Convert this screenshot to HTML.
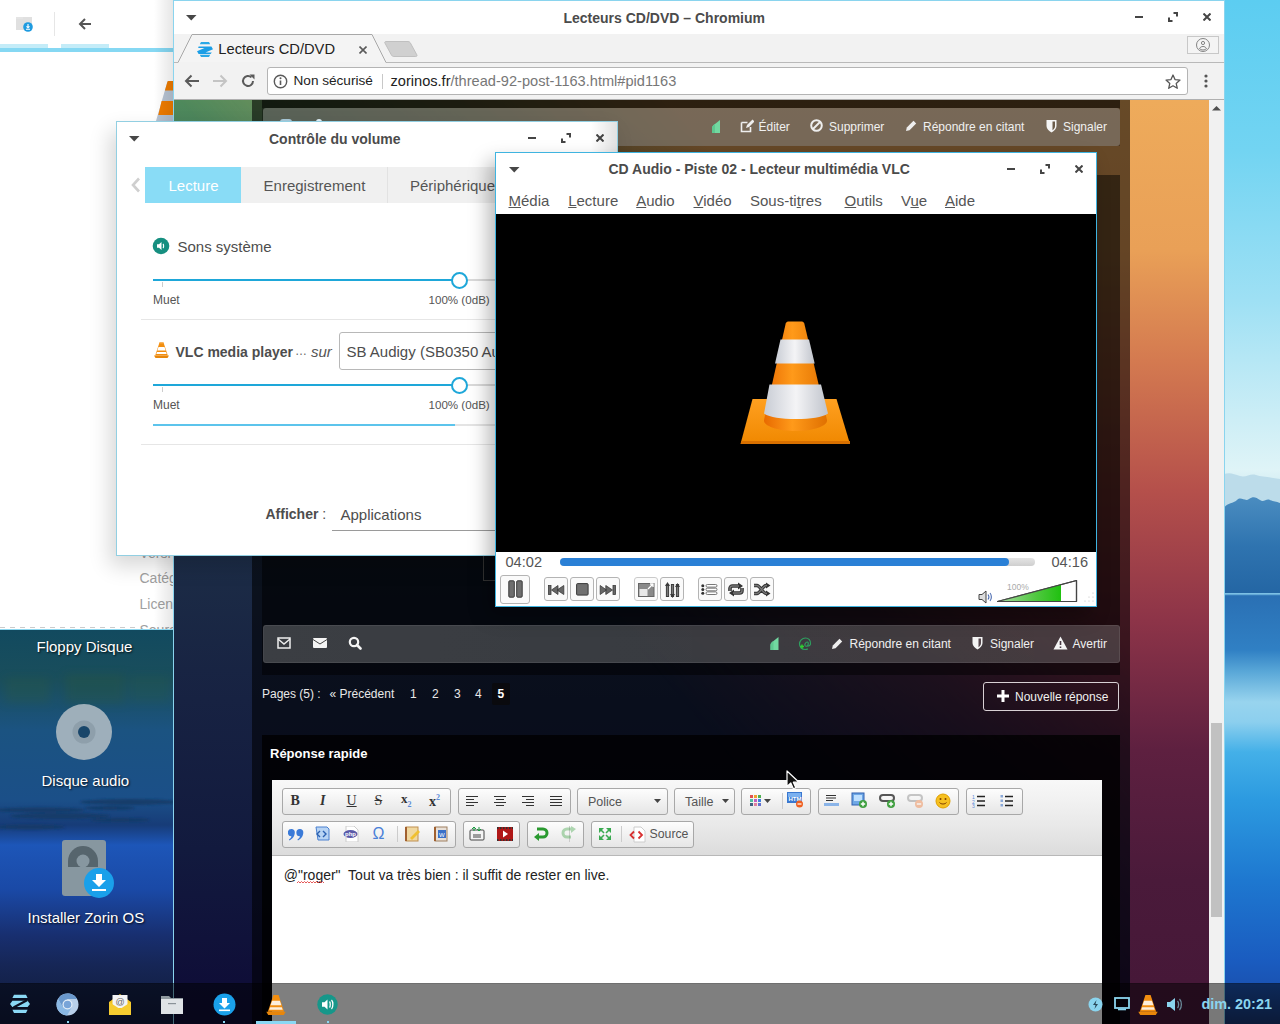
<!DOCTYPE html>
<html><head><meta charset="utf-8">
<style>
*{margin:0;padding:0;box-sizing:border-box}
html,body{width:1280px;height:1024px;overflow:hidden;background:#3a9ad8;font-family:"Liberation Sans",sans-serif}
.a{position:absolute}
.t{position:absolute;white-space:pre;line-height:1}
.vb{border:1px solid #b4b4b4;border-radius:3px;background:#fafafa}
.eg{border:1px solid #a8a8a8;border-radius:3px;background:linear-gradient(to bottom,#fdfdfd,#e6e6e6)}
</style></head><body>
<!-- WALLPAPER -->
<div class="a" id="wall" style="left:0;top:0;width:1280px;height:1024px;background:linear-gradient(to bottom,#5ccdf1 0px,#72d4f2 150px,#9ee0f4 300px,#cdeef6 420px,#dff4f7 470px,#c8e6f0 500px,#3a7ab0 560px,#2a6aa6 592px,#70b8e0 593px,#2a70b4 596px,#3080c4 650px,#5aa8d8 672px,#98d4ee 702px,#8ccfee 722px,#44b0e8 752px,#2c9ae0 800px,#1e78d0 880px,#1a5cc0 960px,#1a54b4 983px,#183470 1024px)"></div>
<div class="a" style="left:0;top:630px;width:174px;height:394px;background:linear-gradient(to bottom,#124a5f 0px,#1a4e5c 50px,#1b5381 100px,#1b4f88 170px,#173c78 195px,#1d56b8 215px,#1a49a6 260px,#182f70 305px,#162656 335px,#14224c 353px,#101a3c 394px)"></div>

<svg class="a" style="left:1224px;top:460px" width="56" height="250" viewBox="0 0 56 250"><defs><linearGradient id="tr" x1="0" y1="0" x2="0" y2="1"><stop offset="0" stop-color="#4a8cc0"/><stop offset=".5" stop-color="#2f74b0"/><stop offset="1" stop-color="#2466a4"/></linearGradient></defs><path d="M0 14c6-2 10 0 16 2s10-3 16-1 14 2 24 4V133H0z" fill="#bcdcea"/><path d="M0 48c4-6 9-4 13-8s8 2 12-1 7-2 11 1 6-2 10 0 6 1 10 3V133H0z" fill="url(#tr)"/><rect x="0" y="133" width="56" height="1.5" fill="#7cc0e4"/></svg>
<svg class="a" style="left:0;top:630px" width="174" height="360" viewBox="0 0 174 360"><defs><filter id="bl" x="-20%" y="-50%" width="140%" height="200%"><feGaussianBlur stdDeviation="1.2"/></filter><filter id="bl2" x="-20%" y="-50%" width="140%" height="200%"><feGaussianBlur stdDeviation="5"/></filter></defs>
<g filter="url(#bl2)" opacity=".3"><rect x="5" y="48" width="45" height="25" fill="#2a5a40"/><rect x="65" y="44" width="60" height="30" fill="#2a5838"/><rect x="130" y="46" width="40" height="26" fill="#285a48"/></g>
<g filter="url(#bl)" fill="#153a66" opacity=".85"><ellipse cx="130" cy="172" rx="50" ry="3"/><ellipse cx="40" cy="180" rx="45" ry="2.5"/><ellipse cx="60" cy="186" rx="50" ry="3"/><ellipse cx="120" cy="190" rx="30" ry="2"/><ellipse cx="30" cy="197" rx="35" ry="2.5"/><ellipse cx="110" cy="178" rx="25" ry="2"/></g></svg>
<!-- LEFT APP WINDOW -->
<div class="a" id="leftwin" style="left:0;top:0;width:174px;height:630px;background:#fff;overflow:hidden">
  <div class="a" style="left:0;top:44px;width:48px;height:4px;background:#c4ecf8"></div>
  <div class="a" style="left:61px;top:44px;width:48px;height:4px;background:#c4ecf8"></div>
  <div class="a" style="left:0;top:48px;width:174px;height:4px;background:#86d8f3"></div>
  <div class="a" style="left:16px;top:17px;width:16px;height:13px;background:#e0e0e0"></div>
  <div class="a" style="left:16px;top:17px;width:7px;height:2px;background:#e4e4e4"></div>
  <svg class="a" style="left:23px;top:22px" width="10" height="10"><circle cx="5" cy="5" r="4.8" fill="#1e9be0"/><path d="M5 2v3.5M3.5 4.3L5 5.8 6.5 4.3M3 7.3h4" stroke="#fff" stroke-width="1.1" fill="none"/></svg>
  <div class="a" style="left:54px;top:12px;width:1px;height:24px;background:#e6e6e6"></div>
  <svg class="a" style="left:78px;top:17px" width="14" height="14" viewBox="0 0 14 14"><path d="M13 7H2M7 2L2 7l5 5" stroke="#555" stroke-width="2" fill="none"/></svg>
  <svg class="a" style="left:148px;top:80px" width="30" height="42" viewBox="0 0 30 42"><path d="M19.5 1.5c.5-.5 1-.6 2-.6H26V41H8z" fill="#b8c4d4"/><path d="M19.5 1.5c.5-.5 1-.6 2-.6H26v9.5H16.9z M13.6 21H26v14H10.3z" fill="#f07c00"/><path d="M2 41h7v1H2z" fill="#e08a20"/></svg>
  <div class="t" style="left:139.5px;top:546px;font-size:14px;color:#a0a0a0">Versi</div>
  <div class="t" style="left:139.5px;top:571.3px;font-size:14px;color:#a0a0a0">Catég</div>
  <div class="t" style="left:139.5px;top:597px;font-size:14px;color:#a0a0a0">Licen</div>
  <div class="t" style="left:139.5px;top:622.8px;font-size:14px;color:#a0a0a0">Sourc</div>
  <div class="a" style="left:0;top:627px;width:139px;height:1px;background:repeating-linear-gradient(to right,#ccc 0 5px,transparent 5px 10px)"></div>
  <div class="a" style="left:154px;top:0;width:20px;height:630px;background:linear-gradient(to right,rgba(0,0,0,0),rgba(0,0,0,0.1))"></div>
</div>
<div class="a" style="left:0;top:629px;width:174px;height:1px;background:#8dd6ee"></div>

<!-- DESKTOP ICONS -->
<div class="t" style="left:36.5px;top:638.5px;font-size:15px;color:#fff;text-shadow:1px 1px 2px rgba(0,0,0,.8)">Floppy Disque</div>
<svg class="a" style="left:55px;top:703px" width="58" height="58"><circle cx="29" cy="29" r="28" fill="#a9b7c0" fill-opacity=".92"/><circle cx="29" cy="29" r="11.5" fill="#8e9fab"/><circle cx="29" cy="29" r="6" fill="#19466a"/></svg>
<div class="t" style="left:41.5px;top:773.3px;font-size:15px;color:#fff;text-shadow:1px 1px 2px rgba(0,0,0,.8)">Disque audio</div>
<svg class="a" style="left:61px;top:839px" width="56" height="60"><rect x="1" y="1" width="44" height="56" rx="3" fill="#8797a0"/><path d="M7 28V22a15 15 0 0 1 30 0v6z" fill="#56656d"/><circle cx="22" cy="22" r="6.5" fill="#8797a0"/><circle cx="38" cy="44" r="15" fill="#1aa0ea"/><path d="M35 35h6v6h4l-7 7-7-7h4z" fill="#fff"/><rect x="31" y="50" width="14" height="2" fill="#fff"/></svg>
<div class="t" style="left:27.5px;top:909.8px;font-size:15px;color:#fff;text-shadow:1px 1px 2px rgba(0,0,0,.8)">Installer Zorin OS</div>

<!-- BROWSER -->
<div class="a" id="browser" style="left:173px;top:0;width:1052px;height:1024px;background:#fff;overflow:hidden">
  <!-- page bg -->
  <div class="a" style="left:1px;top:100px;width:1036px;height:924px;background:linear-gradient(to bottom,#4f8a5c 0px,#3a6a58 120px,#26445c 300px,#1c2c46 455px,#172242 600px,#121a3e 750px,#0f0e38 883px,#0e0c34 924px)"></div>
  <div class="a" style="left:1px;top:100px;width:1036px;height:924px;background:linear-gradient(to bottom,#eeab5b 0px,#e9a057 150px,#d47a50 260px,#b5504b 390px,#8d3448 520px,#5e2040 650px,#4a1a3a 780px,#461838 883px,#451838 924px);-webkit-mask-image:linear-gradient(50deg,rgba(0,0,0,0) 43%,rgba(0,0,0,.45) 58%,#000 70%)"></div>
  <div class="a" style="left:957px;top:100px;width:79px;height:924px;background:linear-gradient(to bottom,#eeab5b 0px,#e9a057 150px,#d47a50 260px,#b5504b 390px,#8d3448 520px,#5e2040 650px,#4a1a3a 780px,#461838 883px,#451838 924px)"></div>
  <!-- container -->
  <div class="a" style="left:79px;top:100px;width:878px;height:924px;background:rgba(0,0,0,.57)"></div>
  <!-- post 1 header -->
  <div class="a" style="left:89px;top:100px;width:858px;height:46px;background:rgba(0,0,0,.32)"></div>
  <div class="a" style="left:89px;top:100px;width:858px;height:8px;background:rgba(0,0,0,.35)"></div>
  <div class="a" style="left:90px;top:108px;width:857px;height:38px;background:rgba(255,255,255,.27);border-radius:3px"></div>
  <!-- post 1 body -->
  <div class="a" style="left:89px;top:175px;width:858px;height:500px;background:rgba(0,0,0,.48)"></div>
  <div class="a" style="left:310px;top:480px;width:40px;height:101px;border-left:1px solid #333;border-bottom:1px solid #333"></div>
  <div class="a" style="left:90px;top:625px;width:857px;height:38px;background:linear-gradient(to right,rgba(255,255,255,.22),rgba(255,255,255,.2));border-radius:3px;border:1px solid rgba(255,255,255,.07)"></div>
  <!-- reponse rapide box -->
  <div class="a" style="left:89px;top:735px;width:858px;height:289px;background:rgba(0,0,0,.78)"></div>
  <!-- scrollbar -->
  <div class="a" style="left:1036px;top:100px;width:15px;height:924px;background:#f1f1f1"></div>
  <div class="a" style="left:1038px;top:723px;width:11px;height:194px;background:#c1c1c1"></div>
  <svg class="a" style="left:1039px;top:105px" width="9" height="6"><path d="M0 5.5L4.5 1 9 5.5z" fill="#505050"/></svg>

  <!-- post1 bar items -->
  <div class="a" style="left:107px;top:119px;width:12px;height:3px;border-radius:6px 6px 0 0;background:#a8c8d8"></div>
  <div class="a" style="left:143px;top:119px;width:6px;height:3px;border-radius:3px 3px 0 0;background:#e0f0f8"></div>
  <svg class="a" style="left:538px;top:120px" width="10" height="13" viewBox="0 0 10 13"><path d="M1 13V8c0-2 1.5-3 3-4l5-4v13z" fill="#72d8a0"/><path d="M1 13V8c0-2 1.5-3 3-4v9z" fill="#5ec890"/></svg>
  <svg class="a" style="left:567px;top:119px" width="14" height="14" viewBox="0 0 14 14"><path d="M1.5 3.5h6M1.5 3.5v9h9V8" stroke="#eee" stroke-width="1.6" fill="none"/><path d="M6 9l1-3 5.5-5.5 2 2L9 8z" fill="#eee"/></svg>
  <div class="t" style="left:585.5px;top:121px;font-size:12px;color:#f0f0f0">Éditer</div>
  <svg class="a" style="left:637px;top:119px" width="13" height="13" viewBox="0 0 13 13"><circle cx="6.5" cy="6.5" r="5.3" stroke="#eee" stroke-width="2" fill="none"/><path d="M3 10L10 3" stroke="#eee" stroke-width="2"/></svg>
  <div class="t" style="left:656px;top:121px;font-size:12px;color:#f0f0f0">Supprimer</div>
  <svg class="a" style="left:732px;top:119px" width="12" height="13" viewBox="0 0 12 13"><path d="M1 12l.8-3.5L8.5 1.8l2.7 2.7-6.7 6.7z" fill="#eee"/></svg>
  <div class="t" style="left:750px;top:121px;font-size:12px;color:#f0f0f0">Répondre en citant</div>
  <svg class="a" style="left:873px;top:119px" width="11" height="14" viewBox="0 0 11 14"><path d="M.5 1h10v6c0 3-2.5 5-5 6.5C3 12 .5 10 .5 7z" fill="#f4f4f4"/><path d="M6.5 2.5h2.5v4.5c0 2-1.3 3.5-2.5 4.3z" fill="#6a5a48"/></svg>
  <div class="t" style="left:890px;top:121px;font-size:12px;color:#f0f0f0">Signaler</div>

  <!-- post2 bar items -->
  <svg class="a" style="left:104px;top:637px" width="14" height="12" viewBox="0 0 14 12"><rect x="1" y="1" width="12" height="10" stroke="#eee" stroke-width="1.5" fill="none"/><path d="M1 2l6 5 6-5" stroke="#eee" stroke-width="1.5" fill="none"/></svg>
  <svg class="a" style="left:140px;top:637px" width="14" height="12" viewBox="0 0 14 12"><rect x="0" y="1" width="14" height="10" rx="1" fill="#f4f4f4"/><path d="M0 2.5l7 4.5 7-4.5" stroke="#444" stroke-width="1" fill="none"/></svg>
  <svg class="a" style="left:175px;top:636px" width="14" height="14" viewBox="0 0 14 14"><circle cx="6" cy="6" r="4.2" stroke="#f4f4f4" stroke-width="2.2" fill="none"/><path d="M9 9l3.5 3.5" stroke="#f4f4f4" stroke-width="2.6" stroke-linecap="round"/></svg>
  <svg class="a" style="left:596px;top:637px" width="11" height="13" viewBox="0 0 10 13"><path d="M1 13V8c0-2 1.5-3 3-4l5-4v13z" fill="#72d8a0"/><path d="M1 13V8c0-2 1.5-3 3-4v9z" fill="#5ec890"/></svg>
  <svg class="a" style="left:624px;top:636px" width="16" height="15" viewBox="0 0 16 15"><path d="M11 9.5c-1 1-2.5 1-3 0-.6-1.4.8-3.5 2.2-3.5 1 0 1.2 1 1 2l-.3 1.5c.4 1 2 .4 2.6-1.5C14 4.5 11.5 2 8.5 2 5 2 2.5 4.8 2.5 8s2.5 5.5 5.5 5.5c1 0 2-.2 2.8-.6" stroke="#2ea060" stroke-width="1.2" fill="none"/><path d="M3 10.5h4M5 8.5v4" stroke="#2fd02f" stroke-width="1.5"/></svg>
  <svg class="a" style="left:658px;top:637px" width="12" height="13" viewBox="0 0 12 13"><path d="M1 12l.8-3.5L8.5 1.8l2.7 2.7-6.7 6.7z" fill="#eee"/></svg>
  <div class="t" style="left:676.5px;top:638px;font-size:12px;color:#f0f0f0">Répondre en citant</div>
  <svg class="a" style="left:799px;top:636px" width="11" height="14" viewBox="0 0 11 14"><path d="M.5 1h10v6c0 3-2.5 5-5 6.5C3 12 .5 10 .5 7z" fill="#f4f4f4"/><path d="M6.5 2.5h2.5v4.5c0 2-1.3 3.5-2.5 4.3z" fill="#54474c"/></svg>
  <div class="t" style="left:817px;top:638px;font-size:12px;color:#f0f0f0">Signaler</div>
  <svg class="a" style="left:880px;top:636px" width="15" height="14" viewBox="0 0 15 14"><path d="M7.5 .5L14.5 13.5H.5z" fill="#f4f4f4"/><path d="M7.5 5v4M7.5 10.5v1.5" stroke="#4a3a44" stroke-width="1.6"/></svg>
  <div class="t" style="left:899.5px;top:638px;font-size:12px;color:#f0f0f0">Avertir</div>

  <!-- pages row -->
  <div class="t" style="left:89px;top:688px;font-size:12px;color:#e8e8e8">Pages (5) :</div>
  <div class="t" style="left:156.5px;top:688px;font-size:12px;color:#e8e8e8">« Précédent</div>
  <div class="t" style="left:237px;top:688px;font-size:12px;color:#e8e8e8">1</div>
  <div class="t" style="left:259px;top:688px;font-size:12px;color:#e8e8e8">2</div>
  <div class="t" style="left:281px;top:688px;font-size:12px;color:#e8e8e8">3</div>
  <div class="t" style="left:302px;top:688px;font-size:12px;color:#e8e8e8">4</div>
  <div class="a" style="left:319px;top:683px;width:18px;height:22px;background:#0a0a0e;border-radius:2px"></div>
  <div class="t" style="left:324.5px;top:688px;font-size:12px;font-weight:bold;color:#fff">5</div>
  <div class="a" style="left:810px;top:682px;width:136px;height:29px;border:1px solid #d8d0d4;border-radius:3px"></div>
  <svg class="a" style="left:824px;top:690px" width="12" height="12"><path d="M6 0v12M0 6h12" stroke="#fff" stroke-width="3"/></svg>
  <div class="t" style="left:842px;top:691px;font-size:12px;color:#f0f0f0">Nouvelle réponse</div>
  <div class="t" style="left:97px;top:747px;font-size:13px;font-weight:bold;color:#fff">Réponse rapide</div>

  <!-- EDITOR -->
  <div class="a" style="left:99px;top:780px;width:830px;height:244px;background:#fff"></div>
  <div class="a" style="left:99px;top:780px;width:830px;height:76px;background:linear-gradient(to bottom,#f8f8f8,#e9e9e9 60%,#dcdcdc);border-bottom:1px solid #b8b8b8"></div>
  <!-- row1 groups -->
  <div class="a eg" style="left:108.5px;top:787.5px;width:169px;height:27px"></div>
  <div class="a eg" style="left:284.5px;top:787.5px;width:113px;height:27px"></div>
  <div class="a eg" style="left:404px;top:787.5px;width:91px;height:27px"></div>
  <div class="a eg" style="left:501px;top:787.5px;width:61px;height:27px"></div>
  <div class="a eg" style="left:568px;top:787.5px;width:70px;height:27px"></div>
  <div class="a eg" style="left:644.5px;top:787.5px;width:141px;height:27px"></div>
  <div class="a eg" style="left:792.5px;top:787.5px;width:57px;height:27px"></div>
  <!-- row2 groups -->
  <div class="a eg" style="left:108.5px;top:820.5px;width:174px;height:27px"></div>
  <div class="a eg" style="left:289.5px;top:820.5px;width:57px;height:27px"></div>
  <div class="a eg" style="left:353.5px;top:820.5px;width:57px;height:27px"></div>
  <div class="a eg" style="left:417.5px;top:820.5px;width:103px;height:27px"></div>
  <!-- row1 icons -->
  <div class="t" style="left:117.5px;top:794px;font-family:'Liberation Serif';font-size:14px;font-weight:bold;color:#333">B</div>
  <div class="t" style="left:147px;top:794px;font-family:'Liberation Serif';font-size:14px;font-style:italic;font-weight:bold;color:#333">I</div>
  <div class="t" style="left:173.5px;top:794px;font-family:'Liberation Serif';font-size:14px;color:#333;text-decoration:underline">U</div>
  <div class="t" style="left:201.5px;top:794px;font-family:'Liberation Serif';font-size:14px;color:#333;text-decoration:line-through">S</div>
  <div class="t" style="left:228px;top:792px;font-family:'Liberation Serif';font-size:13px;font-weight:bold;color:#333">x<sub style="font-size:8px;color:#5a8ad8">2</sub></div>
  <div class="t" style="left:256px;top:794px;font-family:'Liberation Serif';font-size:14px;font-weight:bold;color:#333">x<sup style="font-size:8px;color:#5a8ad8">2</sup></div>
  <svg class="a" style="left:292px;top:794px" width="14" height="14"><path d="M1 2.5h12M1 5.5h8M1 8.5h12M1 11.5h8" stroke="#333" stroke-width="1.2"/></svg>
  <svg class="a" style="left:320px;top:794px" width="14" height="14"><path d="M1 2.5h12M3 5.5h8M1 8.5h12M3 11.5h8" stroke="#333" stroke-width="1.2"/></svg>
  <svg class="a" style="left:348px;top:794px" width="14" height="14"><path d="M1 2.5h12M5 5.5h8M1 8.5h12M5 11.5h8" stroke="#333" stroke-width="1.2"/></svg>
  <svg class="a" style="left:376px;top:794px" width="14" height="14"><path d="M1 2.5h12M1 5.5h12M1 8.5h12M1 11.5h12" stroke="#333" stroke-width="1.2"/></svg>
  <div class="t" style="left:415px;top:795.5px;font-size:12.5px;color:#555">Police</div>
  <svg class="a" style="left:481px;top:799px" width="7" height="4"><path d="M0 0h7L3.5 4z" fill="#444"/></svg>
  <div class="t" style="left:512px;top:795.5px;font-size:12.5px;color:#555">Taille</div>
  <svg class="a" style="left:549px;top:799px" width="7" height="4"><path d="M0 0h7L3.5 4z" fill="#444"/></svg>
  <svg class="a" style="left:577px;top:795px" width="12" height="12"><rect x="0" y="0" width="3" height="3" fill="#e05050"/><rect x="4" y="0" width="3" height="3" fill="#f0a030"/><rect x="8" y="0" width="3" height="3" fill="#50b050"/><rect x="0" y="4" width="3" height="3" fill="#50c0a0"/><rect x="4" y="4" width="3" height="3" fill="#c060c0"/><rect x="8" y="4" width="3" height="3" fill="#4080e0"/><rect x="0" y="8" width="3" height="3" fill="#406080"/><rect x="4" y="8" width="3" height="3" fill="#e080a0"/><rect x="8" y="8" width="3" height="3" fill="#6070d0"/></svg>
  <svg class="a" style="left:591px;top:799px" width="7" height="4"><path d="M0 0h7L3.5 4z" fill="#444"/></svg>
  <div class="a" style="left:609px;top:793px;width:1px;height:16px;background:#ccc"></div>
  <svg class="a" style="left:614px;top:792px" width="17" height="16"><rect x="0" y="0" width="15" height="11" fill="#3a78d0"/><rect x="1" y="1" width="13" height="4" fill="#7ab0f0"/><text x="1.5" y="9" font-size="6" font-family="Liberation Sans" fill="#fff" font-weight="bold">HTM</text><circle cx="12.5" cy="12" r="3.5" fill="#f06020"/><path d="M10.5 12h4" stroke="#fff" stroke-width="1.2"/></svg>
  <svg class="a" style="left:651px;top:794px" width="15" height="12"><path d="M2 1.5h10M2 4h10M2 6.5h7" stroke="#333" stroke-width="1.2"/><rect x="0" y="9" width="15" height="3" fill="#8ab4e8"/></svg>
  <svg class="a" style="left:678px;top:792px" width="17" height="17"><rect x="1" y="1" width="12" height="12" fill="#6fa8e6" stroke="#3060b0"/><rect x="3" y="3" width="8" height="6" fill="#bfe0ff"/><circle cx="12" cy="12" r="4" fill="#40a040"/><path d="M12 9.8v4.4M9.8 12h4.4" stroke="#fff" stroke-width="1.4"/></svg>
  <svg class="a" style="left:706px;top:792px" width="17" height="17"><rect x="1" y="3" width="14" height="6" rx="3" fill="none" stroke="#555" stroke-width="2"/><circle cx="12" cy="12" r="4" fill="#40a040"/><path d="M12 9.8v4.4M9.8 12h4.4" stroke="#fff" stroke-width="1.4"/></svg>
  <svg class="a" style="left:734px;top:792px" width="17" height="17" opacity=".45"><rect x="1" y="3" width="14" height="6" rx="3" fill="none" stroke="#888" stroke-width="2"/><circle cx="12" cy="12" r="4" fill="#f08040"/><path d="M9.8 12h4.4" stroke="#fff" stroke-width="1.4"/></svg>
  <svg class="a" style="left:762px;top:793px" width="16" height="16"><circle cx="8" cy="8" r="7" fill="#f6c020" stroke="#e0a000"/><circle cx="5.5" cy="6" r="1" fill="#804000"/><circle cx="10.5" cy="6" r="1" fill="#804000"/><path d="M4.5 9.5c1.5 2 5.5 2 7 0" stroke="#804000" fill="none"/></svg>
  <svg class="a" style="left:799px;top:794px" width="14" height="14"><path d="M5 2.5h8M5 7h8M5 11.5h8" stroke="#222" stroke-width="1.3"/><text x="0" y="5" font-size="5" fill="#5a8ad8" font-family="Liberation Sans">1</text><text x="0" y="9.5" font-size="5" fill="#5a8ad8" font-family="Liberation Sans">2</text><text x="0" y="14" font-size="5" fill="#5a8ad8" font-family="Liberation Sans">3</text></svg>
  <svg class="a" style="left:827px;top:794px" width="14" height="14"><path d="M5 2.5h8M5 7h8M5 11.5h8" stroke="#222" stroke-width="1.3"/><rect x="0.5" y="1" width="2.5" height="2.5" fill="#8aa8d8"/><rect x="0.5" y="5.5" width="2.5" height="2.5" fill="#8aa8d8"/><rect x="0.5" y="10" width="2.5" height="2.5" fill="#8aa8d8"/></svg>
  <!-- row2 icons -->
  <svg class="a" style="left:115px;top:829px" width="16" height="12" viewBox="0 0 16 12"><path d="M3.5 0a3.3 3.3 0 0 1 3.3 3.6c0 3.5-2.3 6.5-5.3 8l-.6-1c1.5-1 2.4-2.2 2.5-3.4A3.2 3.2 0 0 1 3.5 0z M12 0a3.3 3.3 0 0 1 3.3 3.6c0 3.5-2.3 6.5-5.3 8l-.6-1c1.5-1 2.4-2.2 2.5-3.4A3.2 3.2 0 0 1 12 0z" fill="#3a7ad8"/></svg>
  <svg class="a" style="left:141px;top:826px" width="16" height="16"><path d="M2 1h11l2 2v11H4z" fill="#b8d4f4" stroke="#4a80d0"/><path d="M6 5l-3 3 3 3M9 5l3 3-3 3" stroke="#2a60b0" stroke-width="1.4" fill="none"/></svg>
  <svg class="a" style="left:341px;top:826px" width="16" height="16"></svg>
  <svg class="a" style="left:170px;top:826px" width="16" height="16"><path d="M3 0h8l4 4v12H3z" fill="#fff" stroke="#ccc"/><ellipse cx="7.5" cy="8" rx="7" ry="4" fill="#5a5aa8"/><text x="2" y="10" font-size="6" fill="#fff" font-family="Liberation Sans" font-weight="bold">php</text></svg>
  <div class="t" style="left:199.5px;top:826px;font-size:16px;color:#4a80d8">Ω</div>
  <div class="a" style="left:396px;top:826px;width:1px;height:16px;background:#ccc"></div>
  <div class="a" style="left:223.5px;top:826px;width:1px;height:16px;background:#ccc"></div>
  <svg class="a" style="left:232px;top:826px" width="15" height="16"><rect x="1" y="1" width="12" height="14" fill="#f0d8a0" stroke="#c09050"/><path d="M1 1v14" stroke="#a06030" stroke-width="2"/><path d="M5 12l8-8 2 2-8 8z" fill="#f0c030"/></svg>
  <svg class="a" style="left:261px;top:826px" width="15" height="16"><rect x="1" y="1" width="12" height="14" fill="#e8e0d8" stroke="#a08060"/><path d="M1 1v14" stroke="#a06030" stroke-width="2"/><rect x="4" y="4" width="8" height="8" fill="#3a70c8"/><text x="5" y="11" font-size="6" fill="#fff" font-family="Liberation Sans">W</text></svg>
  <svg class="a" style="left:296px;top:826px" width="16" height="15"><rect x="1" y="4" width="14" height="10" rx="1" fill="#f4f4f4" stroke="#444"/><path d="M4 9h8M4 11h8" stroke="#444"/><path d="M5 1v4M3 3l2-2 2 2M10 1v4M8 3l2 2 2-2" stroke="#1a9a40" stroke-width="1" fill="none"/></svg>
  <svg class="a" style="left:324px;top:826px" width="16" height="16"><rect x="0" y="1" width="16" height="14" fill="#b01818"/><path d="M0 2h16M0 14h16" stroke="#333" stroke-width="2" stroke-dasharray="1.5 1.5"/><path d="M6 4.5v7l5-3.5z" fill="#fff"/></svg>
  <svg class="a" style="left:360px;top:826px" width="16" height="15"><path d="M4 3h6a4 4 0 0 1 0 8H6" stroke="#2a9a30" stroke-width="3" fill="none"/><path d="M1 11l5-4v8z" fill="#2a9a30"/></svg>
  <svg class="a" style="left:388px;top:826px" width="16" height="15" opacity=".35"><path d="M12 3H6a4 4 0 0 0 0 8h4" stroke="#2a9a30" stroke-width="3" fill="none"/><path d="M15 3l-5-3v7z" fill="#2a9a30"/></svg>
  <svg class="a" style="left:424px;top:826px" width="16" height="16"><path d="M2 2h5L2 7zM14 2v5L9 2zM2 14v-5l5 5zM14 14H9l5-5z" fill="#3aaa50"/><path d="M3 3l4 4M13 3l-4 4M3 13l4-4M13 13l-4-4" stroke="#3aaa50" stroke-width="1.6"/></svg>
  <div class="a" style="left:448px;top:826px;width:1px;height:16px;background:#ccc"></div>
  <svg class="a" style="left:456px;top:826px" width="17" height="17"><path d="M5 1h7l4 4v11H5z" fill="#fff" stroke="#ccc"/><path d="M5 5.5l-3.5 3.5 3.5 3.5M9.5 5.5l3.5 3.5-3.5 3.5" stroke="#d83030" stroke-width="1.8" fill="none"/></svg>
  <div class="t" style="left:476.5px;top:828px;font-size:12.3px;color:#555">Source</div>
  <!-- text -->
  <div class="t" style="left:110.75px;top:868px;font-size:14px;color:#222">@"roger"  Tout va très bien : il suffit de rester en live.</div>
  <svg class="a" style="left:124px;top:881px" width="28" height="3"><path d="M0 2l1.5-1.5L3 2l1.5-1.5L6 2l1.5-1.5L9 2l1.5-1.5L12 2l1.5-1.5L15 2l1.5-1.5L18 2l1.5-1.5L21 2l1.5-1.5L24 2l1.5-1.5L27 2" stroke="#e03030" stroke-width=".8" fill="none"/></svg>

  <!-- CHROME UI -->
  <div class="a" style="left:0;top:0;width:1052px;height:34px;background:#fff"></div>
  <svg class="a" style="left:13px;top:15px" width="11" height="6"><path d="M0 0h10.5L5.25 5.5z" fill="#474747"/></svg>
  <div class="t" style="left:390.5px;top:11px;font-size:14px;font-weight:bold;color:#4b4b4b">Lecteurs CD/DVD – Chromium</div>
  <div class="a" style="left:962px;top:16px;width:8px;height:2px;background:#454545"></div>
  <svg class="a" style="left:995px;top:12px" width="10" height="10"><path d="M5.5 1H9V4.5M1 5.5V9H4.5" stroke="#454545" stroke-width="2" fill="none"/></svg>
  <svg class="a" style="left:1030px;top:13px" width="8" height="8"><path d="M.5 .5l7 7M7.5 .5l-7 7" stroke="#454545" stroke-width="2"/></svg>
  <!-- tab strip -->
  <div class="a" style="left:0;top:34px;width:1052px;height:28px;background:#f2f2f2"></div>
  <div class="a" style="left:0;top:62px;width:1052px;height:1px;background:#b9b9b9"></div>
  <svg class="a" style="left:0;top:34px" width="260" height="30"><path d="M5 28.5L19 .5H199L213 28.5" fill="#f4f4f4" stroke="#a8a8a8" stroke-width="1"/><rect x="5.5" y="28" width="207" height="2" fill="#f2f2f2"/><path d="M213 7.5h22c1 0 1.8.5 2.3 1.3l6.5 12c.6 1 0 1.7-1 1.7h-22c-1 0-1.8-.5-2.3-1.3l-6.5-12c-.6-1 0-1.7 1-1.7z" fill="#d0d0d0" stroke="#c0c0c0" stroke-width="1"/></svg>
  <svg class="a" style="left:24px;top:42px" width="16" height="15" viewBox="0 0 16 15"><path d="M4 0h8l1.2 2.2H2.8z M2.8 12.8h10.4L12 15H4z" fill="#2aa8e6"/><path d="M1.6 4.5h12.8l1.6 2.8-7.5 3.2h6.3l-1.2 1.5H1.6L0 9.2l7.5-3.2H1.2z" fill="#1b9ee6"/></svg>
  <div class="t" style="left:45.3px;top:42px;font-size:14.7px;color:#222">Lecteurs CD/DVD</div>
  <svg class="a" style="left:186px;top:46px" width="8" height="8"><path d="M.5 .5l7 7M7.5 .5l-7 7" stroke="#5a5a5a" stroke-width="1.6"/></svg>
  <div class="a" style="left:1014px;top:36px;width:32px;height:18px;border:1px solid #c8c8c8;background:#f4f4f4"></div>
  <svg class="a" style="left:1023px;top:38px" width="14" height="14" viewBox="0 0 14 14"><circle cx="7" cy="7" r="6.5" stroke="#777" stroke-width=".9" fill="none"/><circle cx="7" cy="5" r="1.6" stroke="#777" stroke-width=".9" fill="none"/><path d="M3.5 10.5c1-1.5 2-2 3.5-2s2.5.5 3.5 2c-1 1-2 1.5-3.5 1.5s-2.5-.5-3.5-1.5z" stroke="#777" stroke-width=".9" fill="none"/></svg>
  <!-- toolbar -->
  <div class="a" style="left:0;top:63px;width:1052px;height:37px;background:#f2f2f2;border-bottom:1px solid #b0b0b0"></div>
  <svg class="a" style="left:11px;top:74px" width="16" height="14" viewBox="0 0 16 14"><path d="M15 7H2M7.5 1.5L2 7l5.5 5.5" stroke="#5a5a5a" stroke-width="2" fill="none"/></svg>
  <svg class="a" style="left:39px;top:74px" width="16" height="14" viewBox="0 0 16 14"><path d="M1 7h13M8.5 1.5L14 7l-5.5 5.5" stroke="#c4c4c4" stroke-width="2" fill="none"/></svg>
  <svg class="a" style="left:67px;top:73px" width="16" height="16" viewBox="0 0 16 16"><path d="M13 8a5 5 0 1 1-1.5-3.6" stroke="#5a5a5a" stroke-width="2" fill="none"/><path d="M9.5 1.5h5v5z" fill="#5a5a5a"/></svg>
  <div class="a" style="left:93.5px;top:67px;width:921px;height:28px;background:#fff;border:1px solid #b4b4b4;border-radius:3px"></div>
  <svg class="a" style="left:99.5px;top:74px" width="15" height="15" viewBox="0 0 15 15"><circle cx="7.5" cy="7.5" r="6.2" stroke="#5a5a5a" stroke-width="1.4" fill="none"/><path d="M7.5 6.5v4.5" stroke="#5a5a5a" stroke-width="1.6"/><circle cx="7.5" cy="4.3" r="1" fill="#5a5a5a"/></svg>
  <div class="t" style="left:120.5px;top:74px;font-size:13.6px;color:#222">Non sécurisé</div>
  <div class="a" style="left:209px;top:74px;width:1px;height:15px;background:#c8c8c8"></div>
  <div class="t" style="left:217.5px;top:73.5px;font-size:14.6px;color:#222">zorinos.fr<span style="color:#777">/thread-92-post-1163.html#pid1163</span></div>
  <svg class="a" style="left:992px;top:74px" width="16" height="15" viewBox="0 0 16 15"><path d="M8 1l2 4.6 5 .5-3.8 3.3 1.1 4.9L8 11.8l-4.3 2.5 1.1-4.9L1 6.1l5-.5z" stroke="#555" stroke-width="1.3" fill="none" stroke-linejoin="round"/></svg>
  <svg class="a" style="left:1031px;top:74px" width="4" height="14"><circle cx="2" cy="2" r="1.6" fill="#555"/><circle cx="2" cy="7" r="1.6" fill="#555"/><circle cx="2" cy="12" r="1.6" fill="#555"/></svg>
  <!-- border -->
  <div class="a" style="left:0;top:0;width:1px;height:1024px;background:#8ad4ee"></div>
  <div class="a" style="left:0;top:0;width:1052px;height:1px;background:#8ad4ee"></div>
  <div class="a" style="left:1051px;top:0;width:1px;height:1024px;background:#8ad4ee"></div>
</div>

<!-- VOLUME -->
<div class="a" style="left:116px;top:121px;width:502px;height:435px;box-shadow:-6px 10px 20px rgba(0,0,0,.16)"></div>
<div class="a" id="volume" style="left:116px;top:121px;width:502px;height:435px;background:#fff;overflow:hidden">
  <svg class="a" style="left:13px;top:15px" width="11" height="6"><path d="M0 0h10.5L5.25 5.5z" fill="#474747"/></svg>
  <div class="t" style="left:153px;top:10.5px;font-size:14px;font-weight:bold;color:#4b4b4b">Contrôle du volume</div>
  <div class="a" style="left:412px;top:16px;width:8px;height:2px;background:#454545"></div>
  <svg class="a" style="left:445px;top:12px" width="10" height="10"><path d="M5.5 1H9V4.5M1 5.5V9H4.5" stroke="#454545" stroke-width="2" fill="none"/></svg>
  <svg class="a" style="left:480px;top:13px" width="8" height="8"><path d="M.5 .5l7 7M7.5 .5l-7 7" stroke="#454545" stroke-width="2"/></svg>
  <svg class="a" style="left:15px;top:56px" width="10" height="16"><path d="M8 1.5L2 8l6 6.5" stroke="#cfcfcf" stroke-width="2.6" fill="none"/></svg>
  <div class="a" style="left:125px;top:46px;width:380px;height:36px;background:#f0f0f0"></div>
  <div class="a" style="left:29px;top:46px;width:96px;height:36px;background:#89dcf6"></div>
  <div class="a" style="left:271px;top:46px;width:1px;height:36px;background:#e2e2e2"></div>
  <div class="t" style="left:52.5px;top:56.5px;font-size:15px;color:#fff">Lecture</div>
  <div class="t" style="left:147.6px;top:56.5px;font-size:15px;color:#555">Enregistrement</div>
  <div class="t" style="left:294px;top:56.5px;font-size:15px;color:#555">Périphériques</div>
  <svg class="a" style="left:36px;top:116px" width="18" height="18"><circle cx="9" cy="9" r="8.3" fill="#168f80"/><path d="M5 7.3h2l2.5-2.3v8l-2.5-2.3H5z" fill="#fff"/><path d="M11 7c.8.8.8 3.2 0 4" stroke="#fff" stroke-width="1.2" fill="none"/></svg>
  <div class="t" style="left:61.5px;top:117.5px;font-size:15px;color:#4d4d4d">Sons système</div>
  <div class="a" style="left:37px;top:158px;width:306px;height:2px;background:#1ea7d9"></div>
  <div class="a" style="left:343px;top:158px;width:170px;height:2px;background:#dadada"></div>
  <div class="a" style="left:46px;top:161px;width:1px;height:5px;background:#ccc"></div>
  <div class="a" style="left:335px;top:151px;width:17px;height:17px;border:2.5px solid #1ea7d9;border-radius:50%;background:#fff"></div>
  <div class="t" style="left:37px;top:173px;font-size:12px;color:#555">Muet</div>
  <div class="t" style="left:312.5px;top:173px;font-size:11.6px;color:#555">100% (0dB)</div>
  <div class="a" style="left:25px;top:198px;width:480px;height:1px;background:#e6e6e6"></div>
  <svg class="a" style="left:37px;top:220px" width="17" height="17" viewBox="0 0 17 17"><path d="M1 14.5h15L14.5 17h-12z" fill="#e8860a"/><path d="M6.5 1.5h4l4.3 13H2.2z" fill="#f28e10"/><path d="M5.5 6h6l1.2 3.5h-8.4z M4 11h9l.7 2H3.3z" fill="#fff"/><path d="M6.5 1.5h4l.4 1.2H6.1z" fill="#f8a030"/></svg>
  <div class="t" style="left:59.5px;top:223.5px;font-size:14px;font-weight:bold;color:#4d4d4d">VLC media player</div>
  <div class="t" style="left:179px;top:224px;font-size:12px;color:#666">…</div>
  <div class="t" style="left:195px;top:223px;font-size:15px;font-style:italic;color:#555">sur</div>
  <div class="a" style="left:223px;top:211px;width:300px;height:38px;border:1px solid #b8b8b8;border-radius:3px;background:#fff"></div>
  <div class="t" style="left:230.5px;top:223px;font-size:15px;color:#4d4d4d">SB Audigy (SB0350 Audio)</div>
  <div class="a" style="left:37px;top:263px;width:306px;height:2px;background:#1ea7d9"></div>
  <div class="a" style="left:343px;top:263px;width:170px;height:2px;background:#dadada"></div>
  <div class="a" style="left:46px;top:266px;width:1px;height:5px;background:#ccc"></div>
  <div class="a" style="left:335px;top:256px;width:17px;height:17px;border:2.5px solid #1ea7d9;border-radius:50%;background:#fff"></div>
  <div class="t" style="left:37px;top:277.5px;font-size:12px;color:#555">Muet</div>
  <div class="t" style="left:312.5px;top:277.5px;font-size:11.6px;color:#555">100% (0dB)</div>
  <div class="a" style="left:37px;top:303px;width:302px;height:2px;background:#5cc4ec"></div>
  <div class="a" style="left:339px;top:303px;width:170px;height:2px;background:#e4e4e4"></div>
  <div class="a" style="left:25px;top:323px;width:480px;height:1px;background:#e6e6e6"></div>
  <div class="t" style="left:149.5px;top:385.5px;font-size:14px;color:#4d4d4d"><b>Afficher</b> :</div>
  <div class="t" style="left:224.5px;top:385.5px;font-size:15px;color:#4d4d4d">Applications</div>
  <div class="a" style="left:216px;top:409px;width:300px;height:1px;background:#9a9a9a"></div>
  <div class="a" style="left:475px;top:0;width:27px;height:435px;background:linear-gradient(to right,rgba(0,0,0,0),rgba(0,0,0,.12))"></div>
  <div class="a" style="left:0;top:0;width:502px;height:435px;border:1px solid #92cfe2"></div>
</div>

<!-- VLC -->
<div class="a" style="left:495px;top:152px;width:602px;height:455px;box-shadow:-7px 9px 18px rgba(0,0,0,.28)"></div>
<div class="a" id="vlc" style="left:495px;top:152px;width:602px;height:455px;background:#fff;overflow:hidden">
  <svg class="a" style="left:13.5px;top:15px" width="11" height="6"><path d="M0 0h10.5L5.25 5.5z" fill="#474747"/></svg>
  <div class="t" style="left:113.5px;top:10.2px;font-size:14px;font-weight:bold;color:#4b4b4b">CD Audio - Piste 02 - Lecteur multimédia VLC</div>
  <div class="a" style="left:512px;top:16px;width:8px;height:2px;background:#454545"></div>
  <svg class="a" style="left:545px;top:12px" width="10" height="10"><path d="M5.5 1H9V4.5M1 5.5V9H4.5" stroke="#454545" stroke-width="2" fill="none"/></svg>
  <svg class="a" style="left:580px;top:13px" width="8" height="8"><path d="M.5 .5l7 7M7.5 .5l-7 7" stroke="#454545" stroke-width="2"/></svg>
  <div class="t" style="left:13.5px;top:40.5px;font-size:15px;color:#555"><u>M</u>édia</div>
  <div class="t" style="left:73.2px;top:40.5px;font-size:15px;color:#555"><u>L</u>ecture</div>
  <div class="t" style="left:141.2px;top:40.5px;font-size:15px;color:#555"><u>A</u>udio</div>
  <div class="t" style="left:198.5px;top:40.5px;font-size:15px;color:#555"><u>V</u>idéo</div>
  <div class="t" style="left:255px;top:40.5px;font-size:15px;color:#555">Sous-ti<u>t</u>res</div>
  <div class="t" style="left:349.5px;top:40.5px;font-size:15px;color:#555"><u>O</u>utils</div>
  <div class="t" style="left:406px;top:40.5px;font-size:15px;color:#555">V<u>u</u>e</div>
  <div class="t" style="left:450px;top:40.5px;font-size:15px;color:#555"><u>A</u>ide</div>
  <div class="a" style="left:0;top:62px;width:602px;height:338px;background:#000"></div>
  <!-- cone -->
  <svg class="a" style="left:245px;top:168px" width="111" height="125" viewBox="0 0 111 125">
    <defs>
      <linearGradient id="og" x1="0" x2="1"><stop offset="0" stop-color="#e86a00"/><stop offset=".45" stop-color="#ff9a1a"/><stop offset="1" stop-color="#e07000"/></linearGradient>
      <linearGradient id="bg2" x1="0" y1="0" x2="0" y2="1"><stop offset="0" stop-color="#ffa020"/><stop offset="1" stop-color="#f08800"/></linearGradient>
      <linearGradient id="wg" x1="0" x2="1"><stop offset="0" stop-color="#c8ccd4"/><stop offset=".5" stop-color="#f4f4f6"/><stop offset="1" stop-color="#c0c4cc"/></linearGradient>
    </defs>
    <path d="M12.5 79h84l13.5 45H.5z" fill="url(#bg2)"/>
    <path d="M1 121h109v3H1z" fill="#d87000"/>
    <path d="M48 1.5h14c1 0 2 1 2.3 2L87 100c1 6-14 11-31.5 11S23 106 24 100L45.7 3.5c.3-1 1.3-2 2.3-2z" fill="url(#og)"/>
    <path d="M40.5 19.5h28.5l5.7 24H35z" fill="url(#wg)"/>
    <path d="M29.5 64.5h51.5l7 29c-6 4-17 5.5-32 5.5s-26-1.5-32-5.5z" fill="url(#wg)"/>
  </svg>
  <!-- controls -->
  <div class="t" style="left:10.5px;top:403px;font-size:14.6px;color:#555">04:02</div>
  <div class="a" style="left:64.5px;top:405.5px;width:475px;height:8.5px;border-radius:4.25px;background:linear-gradient(to bottom,#e4e4e4,#cfcfcf)"></div>
  <div class="a" style="left:64.5px;top:405.5px;width:449px;height:8.5px;border-radius:4.25px;background:#2a80d6"></div>
  <div class="t" style="left:556.5px;top:403px;font-size:14.6px;color:#555">04:16</div>
  <div class="a vb" style="left:5px;top:422.5px;width:30px;height:29.5px"></div>
  <div class="a vb" style="left:49px;top:425px;width:24px;height:24px"></div>
  <div class="a vb" style="left:75px;top:425px;width:24px;height:24px"></div>
  <div class="a vb" style="left:101px;top:425px;width:24px;height:24px"></div>
  <div class="a vb" style="left:139px;top:425px;width:24px;height:24px;opacity:.7"></div>
  <div class="a vb" style="left:165px;top:425px;width:24px;height:24px"></div>
  <div class="a vb" style="left:203px;top:425px;width:24px;height:24px"></div>
  <div class="a vb" style="left:229px;top:425px;width:24px;height:24px"></div>
  <div class="a vb" style="left:255px;top:425px;width:24px;height:24px"></div>
  <svg class="a" style="left:13px;top:428px" width="15" height="18"><rect x=".8" y=".8" width="5.5" height="16.4" rx="1" fill="#6e6e6e" stroke="#3a3a3a" stroke-width="1"/><rect x="8.7" y=".8" width="5.5" height="16.4" rx="1" fill="#6e6e6e" stroke="#3a3a3a" stroke-width="1"/></svg>
  <svg class="a" style="left:53px;top:433px" width="17" height="10" viewBox="0 0 17 10"><rect x=".5" y=".5" width="2.5" height="9" fill="#666" stroke="#3a3a3a" stroke-width=".8"/><path d="M3.5 5L10 .5v9z M9 5L15.8 .5v9z" fill="#666" stroke="#3a3a3a" stroke-width=".8" stroke-linejoin="round"/></svg>
  <svg class="a" style="left:81px;top:431px" width="13" height="13"><rect x=".6" y=".6" width="11.5" height="11.5" rx="1" fill="#707070" stroke="#3a3a3a" stroke-width="1"/></svg>
  <svg class="a" style="left:104px;top:433px" width="17" height="10" viewBox="0 0 17 10"><rect x="14" y=".5" width="2.5" height="9" fill="#666" stroke="#3a3a3a" stroke-width=".8"/><path d="M1.2 .5L7.5 5 1.2 9.5z M6.8 .5L13.5 5 6.8 9.5z" fill="#666" stroke="#3a3a3a" stroke-width=".8" stroke-linejoin="round"/></svg>
  <svg class="a" style="left:143px;top:431px" width="17" height="14"><rect x=".5" y=".5" width="15.5" height="13" fill="#8a8a8a" stroke="#666"/><rect x="1.5" y="6" width="8" height="7" fill="#e8e8e8"/><path d="M10 6l5-5M12 1h3v3" stroke="#fff" stroke-width="1.3" fill="none"/></svg>
  <svg class="a" style="left:169px;top:429px" width="17" height="17"><path d="M3.5 16V3M8.5 16V3M13.5 16V3" stroke="#3a3a3a" stroke-width="3.2"/><path d="M3.5 15V4M8.5 15V4M13.5 15V4" stroke="#777" stroke-width="1.4"/><path d="M1 5L3.5 1 6 5zM6 13l2.5 4 2.5-4zM11 6l2.5-4 2.5 4z" fill="#3a3a3a"/></svg>
  <svg class="a" style="left:206px;top:432px" width="17" height="11"><circle cx="1.8" cy="1.8" r="1.5" fill="#333"/><circle cx="1.8" cy="5.5" r="1.5" fill="#333"/><circle cx="1.8" cy="9.2" r="1.5" fill="#333"/><rect x="5" y=".5" width="11" height="2.6" rx="1.3" fill="#fff" stroke="#555" stroke-width=".8"/><rect x="5" y="4.2" width="11" height="2.6" rx="1.3" fill="#fff" stroke="#555" stroke-width=".8"/><rect x="5" y="7.9" width="11" height="2.6" rx="1.3" fill="#fff" stroke="#555" stroke-width=".8"/></svg>
  <svg class="a" style="left:232px;top:430px" width="18" height="15"><path d="M3 9V6.5C3 5 4 4 5.5 4H12" stroke="#333" stroke-width="3.6" fill="none"/><path d="M15 6v2.5c0 1.5-1 2.5-2.5 2.5H6" stroke="#333" stroke-width="3.6" fill="none"/><path d="M11 .5l5 3.5-5 3.5z M7 7.5L2 11l5 3.5z" fill="#333"/><path d="M3 9V6.5C3 5 4 4 5.5 4H12M15 6v2.5c0 1.5-1 2.5-2.5 2.5H6" stroke="#777" stroke-width="1.4" fill="none"/></svg>
  <svg class="a" style="left:258px;top:430px" width="18" height="15"><path d="M1 3.5h3c3 0 6 8 9 8h1M1 11.5h3c3 0 6-8 9-8h1" stroke="#333" stroke-width="3.4" fill="none"/><path d="M13 .5l4.5 3-4.5 3z M13 8.5l4.5 3-4.5 3z" fill="#333"/><path d="M1 3.5h3c3 0 6 8 9 8h1M1 11.5h3c3 0 6-8 9-8h1" stroke="#777" stroke-width="1.3" fill="none"/></svg>
  <svg class="a" style="left:483px;top:438px" width="15" height="14"><path d="M1 4.5h3L8 1v12L4 9.5H1z" fill="#ddd" stroke="#444" stroke-width="1"/><path d="M10 4.5c1 1.3 1 3.7 0 5M12 3c1.8 2 1.8 6 0 8" stroke="#4a6ab0" stroke-width="1.1" fill="none"/></svg>
  <svg class="a" style="left:501px;top:427px" width="82" height="24"><defs><linearGradient id="vg" x1="0" x2="1"><stop offset="0" stop-color="#a8dca0"/><stop offset=".6" stop-color="#50c840"/><stop offset="1" stop-color="#20c010"/></linearGradient></defs><path d="M1.5 22.5L80.5 1.5v21z" fill="#fff" stroke="#444" stroke-width="1.2" stroke-linejoin="round"/><path d="M2.5 22L65 5.5V22z" fill="url(#vg)"/><path d="M1.5 22.5L80.5 1.5v21z" fill="none" stroke="#444" stroke-width="1.2" stroke-linejoin="round"/></svg>
  <div class="t" style="left:512px;top:431px;font-size:8.5px;color:#aaa">100%</div>
  <svg class="a" style="left:588px;top:439px" width="12" height="12"><g fill="#bbb"><circle cx="10" cy="2" r=".6"/><circle cx="10" cy="6" r=".6"/><circle cx="10" cy="10" r=".6"/><circle cx="6" cy="6" r=".6"/><circle cx="6" cy="10" r=".6"/><circle cx="2" cy="10" r=".6"/></g></svg>
  <div class="a" style="left:0;top:0;width:602px;height:455px;border:1px solid #3fb4e0"></div>
</div>

<!-- TASKBAR -->
<div class="a" style="left:0;top:983px;width:1280px;height:41px;background:rgba(0,0,0,.5);border-top:1px solid rgba(0,0,0,.12)"></div>
<svg class="a" style="left:0;top:990px" width="40" height="28" viewBox="0 990 40 28"><path d="M14 994.7h12l1.6 3.3H12.4z M12.4 1009.7h15.2l-1.6 3.3H14z" fill="#8ad8f4"/><path d="M12.4 1000.8h15.2L30 1003.9l-2.4 3.1H12.4L10 1003.9z" fill="#8ad8f4"/><path d="M13.5 1007.5L27 1000.3" stroke="#0b1020" stroke-width="2.2"/></svg>
<svg class="a" style="left:56px;top:993px" width="23" height="23" viewBox="0 0 23 23"><circle cx="11.5" cy="11.5" r="11" fill="#b8d0ea"/><path d="M11.5 .5A11 11 0 0 1 21 6H11.5z" fill="#7aa4d4"/><path d="M11.5 .5A11 11 0 0 0 2 6l4.8 8.3L11.5 6H21A11 11 0 0 0 11.5 .5z" fill="#6a98cc"/><path d="M2 6A11 11 0 0 0 11 22.5l4.8-8.3H6.8z" fill="#8ab8e4"/><circle cx="11.5" cy="11.5" r="5" fill="#e4eef8"/><circle cx="11.5" cy="11.5" r="3.8" fill="#78a4d8"/></svg>
<svg class="a" style="left:109px;top:993px" width="22" height="22"><path d="M0 9l11-8 11 8v13H0z" fill="#f0c020"/><rect x="3.5" y="2" width="15" height="13" fill="#f4f4f4"/><text x="6.5" y="11.5" font-size="9" font-family="Liberation Sans" fill="#666">@</text><path d="M0 9l11 7 11-7v13H0z" fill="#f6cc30"/></svg>
<svg class="a" style="left:161px;top:994px" width="22" height="20"><path d="M0 2h8l2 2h12v16H0z" fill="#909aa0"/><rect x="0" y="5" width="22" height="15" fill="#dfe3e6"/><rect x="7" y="9" width="8" height="1.2" fill="#8a9298"/></svg>
<svg class="a" style="left:213px;top:993px" width="23" height="23"><circle cx="11.5" cy="11.5" r="11" fill="#1aa0ea"/><path d="M9 5h5v5h3l-5.5 5.5L6 10h3z" fill="#fff"/><rect x="6" y="16.5" width="11" height="1.6" fill="#fff"/></svg>
<svg class="a" style="left:265px;top:993px" width="22" height="22" viewBox="0 0 17 17"><path d="M1 14.5h15L14.5 17h-12z" fill="#e8860a"/><path d="M6.5 1.5h4l4.3 13H2.2z" fill="#f28e10"/><path d="M5.5 6h6l1.2 3.5h-8.4z M4 11h9l.7 2H3.3z" fill="#fff" fill-opacity=".85"/></svg>
<svg class="a" style="left:317px;top:994px" width="21" height="21"><circle cx="10.5" cy="10.5" r="10.2" fill="#16978a"/><path d="M5 8.3h2.5l3-2.8v10l-3-2.8H5z" fill="#fff"/><path d="M12.5 7.5c1 1 1 5 0 6M14.5 6c1.8 1.8 1.8 7.2 0 9" stroke="#fff" stroke-width="1.3" fill="none"/></svg>
<div class="a" style="left:256px;top:1021px;width:40px;height:3px;background:#8ad8f4"></div>
<div class="a" style="left:67px;top:1021px;width:2px;height:2px;background:#8ad8f4"></div>
<div class="a" style="left:223px;top:1021px;width:2px;height:2px;background:#8ad8f4"></div>
<div class="a" style="left:327px;top:1021px;width:2px;height:2px;background:#8ad8f4"></div>
<svg class="a" style="left:1088px;top:997px" width="15" height="15"><circle cx="7.5" cy="7.5" r="7" fill="#8ad4ee"/><path d="M8.5 3L5 8h2.5L6.5 12 10 7H7.5z" fill="#2a4a5a"/></svg>
<svg class="a" style="left:1114px;top:997px" width="16" height="14"><rect x="1" y="1" width="14" height="10" fill="none" stroke="#8ad4ee" stroke-width="1.8"/><path d="M4 12.5h8" stroke="#8ad4ee" stroke-width="1.6"/></svg>
<svg class="a" style="left:1137px;top:993px" width="22" height="22" viewBox="0 0 17 17"><path d="M1 14.5h15L14.5 17h-12z" fill="#e8860a"/><path d="M6.5 1.5h4l4.3 13H2.2z" fill="#f28e10"/><path d="M5.5 6h6l1.2 3.5h-8.4z M4 11h9l.7 2H3.3z" fill="#fff" fill-opacity=".85"/></svg>
<svg class="a" style="left:1166px;top:997px" width="17" height="15"><path d="M1 5h3l5-4v13L4 10H1z" fill="#8ad4ee"/><path d="M11.5 4c1.5 1.5 1.5 5.5 0 7M13.5 2c2.5 2.5 2.5 8.5 0 11" stroke="#6a8a9a" stroke-width="1.3" fill="none"/></svg>
<div class="t" style="left:1201.5px;top:997.4px;font-size:14.4px;font-weight:bold;color:#8ad4ee">dim. 20:21</div>
<!-- cursor -->
<svg class="a" style="left:786px;top:770px" width="14" height="20" viewBox="0 0 14 20"><path d="M1 1v15.5l3.8-3.5 2.6 5.8 2.4-1-2.5-5.6H13z" fill="#111" stroke="#fff" stroke-width="1.2" stroke-linejoin="round"/></svg>
</body></html>
